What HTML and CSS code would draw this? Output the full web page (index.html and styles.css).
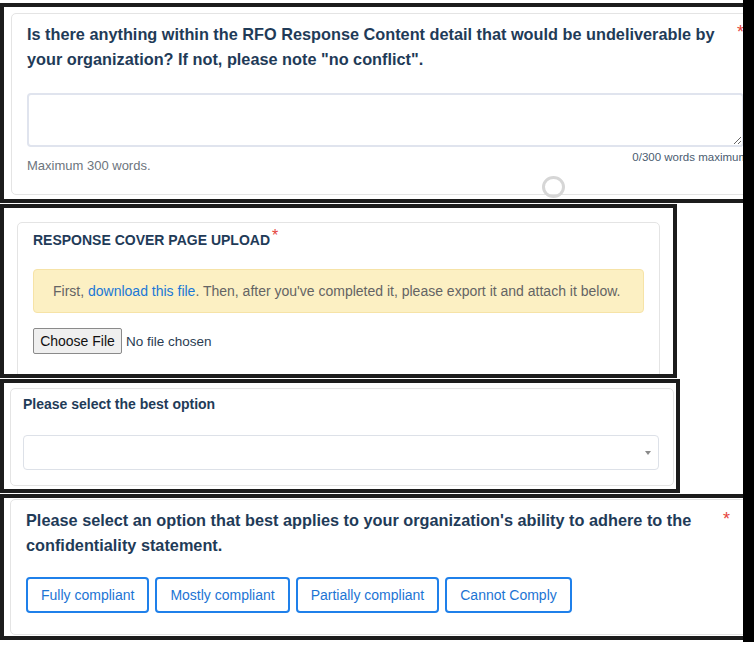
FILE: index.html
```html
<!DOCTYPE html>
<html lang="en">
<head>
<meta charset="utf-8">
<title>RFO Response</title>
<link rel="stylesheet" href="styles.css">
</head>
<body>
<div class="page">
  <section class="frame f1">
    <div class="card c1">
      <div class="q-head">
        <h2 class="q-title">Is there anything within the RFO Response Content detail that would be undeliverable by your organization? If not, please note "no conflict".</h2>
        <span class="req">*</span>
      </div>
      <textarea class="ta"></textarea>
      <div class="ta-foot">
        <span class="help">Maximum 300 words.</span>
        <span class="count">0/300 words maximum</span>
      </div>
    </div>
    <span class="spinner"></span>
  </section>

  <section class="frame f2">
    <div class="card c2">
      <h3 class="up-title">RESPONSE COVER PAGE UPLOAD<span class="req-sup">*</span></h3>
      <div class="alert">First, <a class="link" href="#">download this file</a>. Then, after you've completed it, please export it and attach it below.</div>
      <div class="file-row">
        <span class="file-btn">Choose File</span>
        <span class="file-name">No file chosen</span>
      </div>
    </div>
  </section>

  <section class="frame f3">
    <div class="card c3">
      <h3 class="sel-title">Please select the best option</h3>
      <div class="select"><span class="caret"></span></div>
    </div>
  </section>

  <section class="frame f4">
    <div class="card c4">
      <div class="q-head">
        <h2 class="q-title">Please select an option that best applies to your organization's ability to adhere to the confidentiality statement.</h2>
        <span class="req">*</span>
      </div>
      <div class="opts">
        <span class="opt">Fully compliant</span>
        <span class="opt">Mostly compliant</span>
        <span class="opt">Partially compliant</span>
        <span class="opt">Cannot Comply</span>
      </div>
    </div>
  </section>

  <div class="edge-bar"></div>
</div>
</body>
</html>
```

FILE: styles.css
```css
* { box-sizing: border-box; }
html, body { margin: 0; padding: 0; background: #ffffff; }
body {
  font-family: "Liberation Sans", Arial, sans-serif;
  color: #1f3b58;
  width: 754px;
  height: 645px;
  overflow: hidden;
}
.page {
  position: relative;
  width: 754px;
  padding-top: 3px;
}
.frame {
  border: 4px solid #1c1c1c;
  overflow: hidden;
  margin-bottom: 1px;
  position: relative;
}
.f1 { width: 754px; height: 200px; }
.f2 { width: 677px; height: 174px; }
.f3 { width: 680px; height: 114px; }
.f4 { width: 754px; height: 146px; }

.card {
  border: 1px solid #e4e4e4;
  border-radius: 5px;
  background: #fff;
}
.c1 {
  margin: 6px 0 0 7px;
  width: 750px;
  padding: 8px 16px 21px 15px;
}
.q-head {
  display: flex;
  align-items: flex-start;
}
.q-title {
  margin: 0;
  font-size: 16.3px;
  line-height: 25px;
  font-weight: bold;
  color: #1f3b58;
  flex: 1 1 auto;
}
.req {
  flex: 0 0 auto;
  color: #e5443c;
  font-size: 18px;
  line-height: 18px;
  margin-top: 1px;
  padding-left: 8px;
}
.ta {
  display: block;
  width: 100%;
  height: 54px;
  margin: 21px 0 0 0;
  border: 2px solid #e0e4ee;
  border-radius: 4px;
  resize: vertical;
  font-family: inherit;
}
.ta-foot {
  display: flex;
  justify-content: space-between;
  height: 26px;
}
.help {
  align-self: flex-end;
  font-size: 13px;
  line-height: 15px;
  color: #6d757d;
}
.count {
  align-self: flex-start;
  margin-top: 3px;
  margin-right: -4px;
  font-size: 11.5px;
  line-height: 14px;
  color: #4a5c70;
}
.spinner {
  position: absolute;
  left: 538px;
  top: 169px;
  width: 23px;
  height: 22px;
  border: 3px solid #d6d6d6;
  border-radius: 50%;
}

.c2 {
  margin: 14px 0 0 13px;
  width: 643px;
  height: 200px;
  padding: 0 15px;
}
.up-title {
  margin: 0;
  padding-top: 7px;
  font-size: 14px;
  line-height: 20px;
  font-weight: bold;
  color: #1f3b58;
}
.req-sup {
  color: #e5443c;
  font-size: 16px;
  position: relative;
  top: -4px;
  margin-left: 2px;
  font-weight: normal;
}
.alert {
  margin-top: 19px;
  height: 44px;
  border: 1px solid #f6e3a7;
  border-radius: 4px;
  background: #fcf0c3;
  padding: 0 19px;
  font-size: 14px;
  line-height: 42px;
  color: #646464;
  white-space: nowrap;
}
.link { color: #1b78d6; text-decoration: none; }
.file-row {
  margin-top: 15px;
  display: flex;
  align-items: center;
  gap: 4px;
}
.file-btn {
  display: inline-flex;
  align-items: center;
  justify-content: center;
  width: 89px;
  height: 26px;
  background: #efefef;
  border: 1px solid #8a8a8a;
  border-radius: 2px;
  font-size: 14px;
  color: #111;
}
.file-name {
  font-size: 13.5px;
  color: #2a3c52;
}

.c3 {
  margin: 5px 0 0 6px;
  width: 664px;
  height: 98px;
  padding: 5px 14px 0 12px;
}
.sel-title {
  margin: 0;
  font-size: 14px;
  line-height: 20px;
  font-weight: bold;
  color: #1f3b58;
}
.select {
  margin-top: 21px;
  height: 35px;
  border: 1px solid #dde1e8;
  border-radius: 4px;
  display: flex;
  align-items: center;
  justify-content: flex-end;
  padding-right: 7px;
}
.caret {
  width: 0;
  height: 0;
  border-left: 3px solid transparent;
  border-right: 3px solid transparent;
  border-top: 4px solid #8a8a8a;
}

.c4 {
  margin: 1px 0 0 6px;
  width: 738px;
  padding: 8px 17px 21px 15px;
}
.c4 .req { margin-top: 2px; }
.opts {
  margin-top: 19px;
  display: flex;
  gap: 6px;
}
.opt {
  display: inline-flex;
  align-items: center;
  height: 36px;
  padding: 0 13px;
  border: 2px solid #1f80ea;
  border-radius: 4px;
  font-size: 14px;
  color: #1c74d4;
  background: #fff;
}

.edge-bar {
  position: absolute;
  left: 743px;
  top: 0;
  width: 11px;
  height: 642px;
  background: #000;
}
```
